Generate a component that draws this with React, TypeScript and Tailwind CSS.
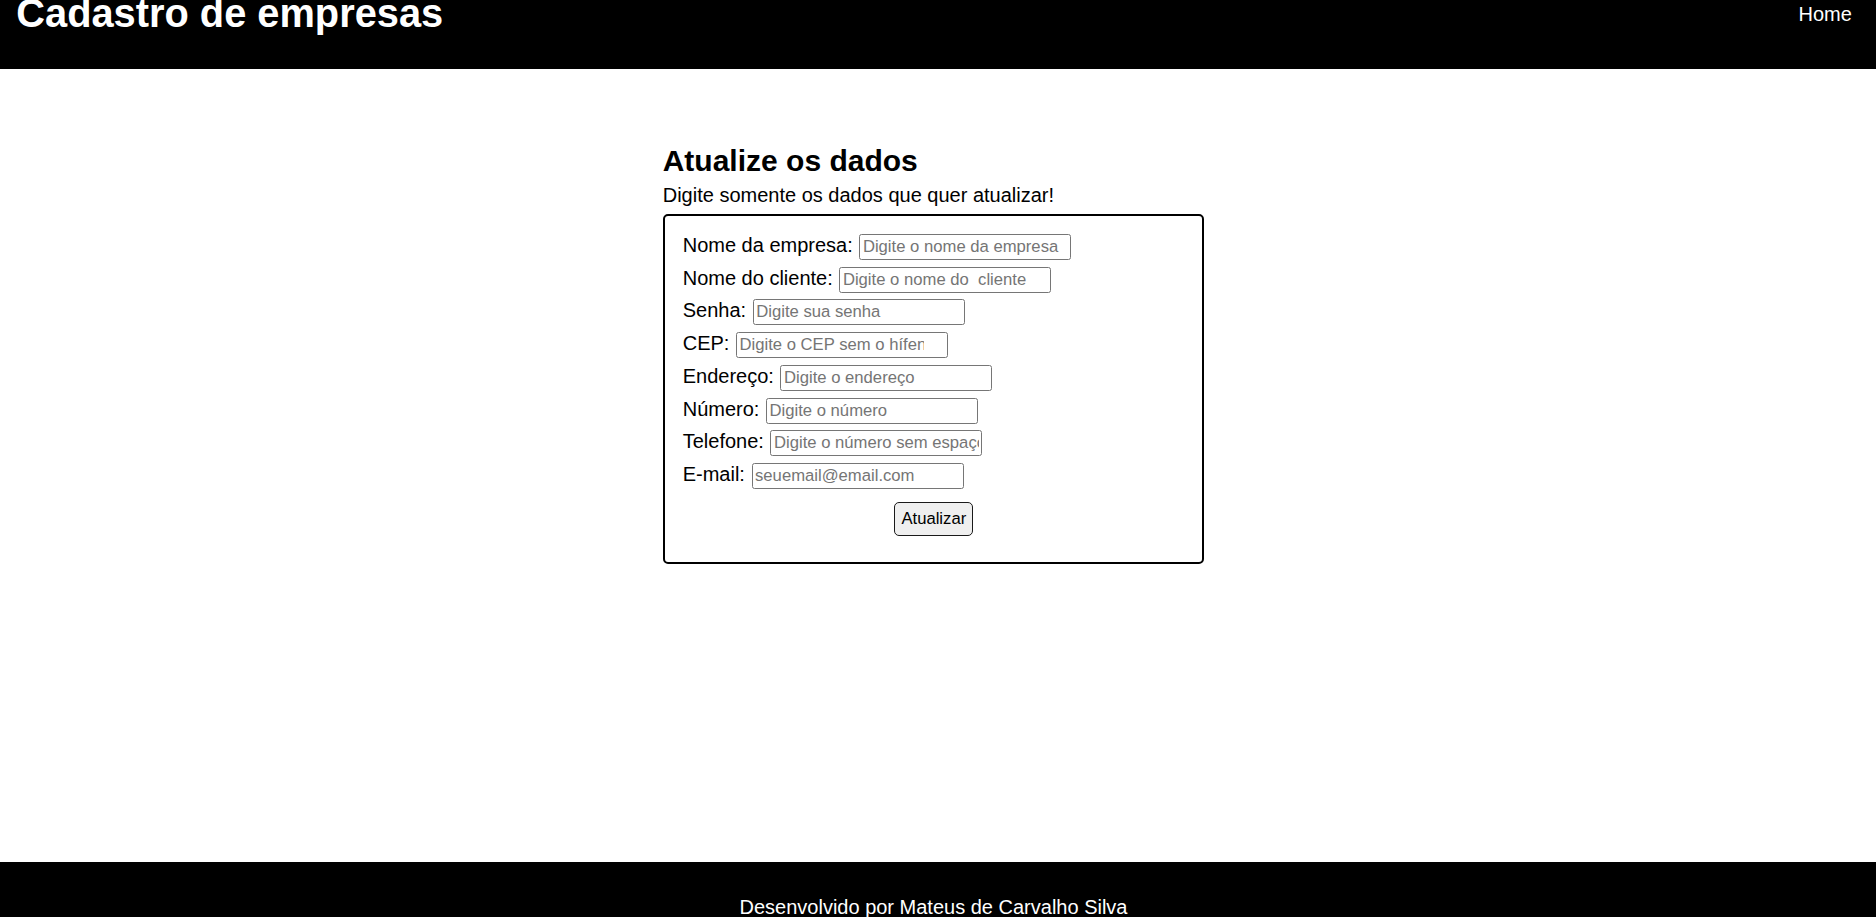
import React from "react";

const fields: { label: string; placeholder: string; type: string; pr: string }[] = [
  { label: "Nome da empresa:", placeholder: "Digite o nome da empresa", type: "text", pr: "pr-[2.5px]" },
  { label: "Nome do cliente:", placeholder: "Digite o nome do  cliente", type: "text", pr: "pr-[2.5px]" },
  { label: "Senha:", placeholder: "Digite sua senha", type: "password", pr: "pr-[2.5px]" },
  { label: "CEP:", placeholder: "Digite o CEP sem o hífen", type: "text", pr: "pr-[23px]" },
  { label: "Endereço:", placeholder: "Digite o endereço", type: "text", pr: "pr-[2.5px]" },
  { label: "Número:", placeholder: "Digite o número", type: "text", pr: "pr-[2.5px]" },
  { label: "Telefone:", placeholder: "Digite o número sem espaços", type: "text", pr: "pr-[2.5px]" },
  { label: "E-mail:", placeholder: "seuemail@email.com", type: "email", pr: "pr-[2.5px]" },
];

export default function App() {
  return (
    <div
      className="flex h-[917px] flex-col overflow-hidden bg-white text-black"
      style={{ fontFamily: '"Liberation Sans", Arial, sans-serif' }}
    >
      <header className="flex h-[69px] shrink-0 items-start justify-between bg-black pl-[16.3px] pr-[24.2px] text-white">
        <h1 className="text-[39.8px] font-bold leading-[27px]">Cadastro de empresas</h1>
        <a className="pt-[2.6px] text-[20px] leading-[23px] text-white" href="#">
          Home
        </a>
      </header>

      <main className="flex flex-1 justify-center pr-[9.6px] pt-[74.6px]">
        <div className="w-[541px]">
          <h2 className="text-[30px] font-bold leading-[34px]">Atualize os dados</h2>
          <p className="mt-[6px] text-[20px] leading-[23px]">
            Digite somente os dados que quer atualizar!
          </p>
          <form
            className="mt-[7px] w-[541px] rounded-[5px] border-2 border-black pb-[26.6px] pl-[18px] pr-[16.8px] pt-[18.5px]"
            onSubmit={(e) => e.preventDefault()}
          >
            <div className="flex flex-col gap-[6.7px]">
              {fields.map((f) => (
                <div key={f.label} className="flex items-baseline gap-[6.6px]">
                  <label className="whitespace-nowrap text-[20px] leading-[23px]">{f.label}</label>
                  <input
                    type={f.type}
                    placeholder={f.placeholder}
                    className={`h-[26px] w-[212px] shrink-0 rounded-[2.5px] border border-[#767676] bg-white pl-[2.5px] ${f.pr} text-[16.67px] leading-[19px] text-black outline-none placeholder:text-[#757575]`}
                    style={{ whiteSpace: "pre" }}
                  />
                </div>
              ))}
            </div>
            <div className="mt-[13.4px] flex justify-center">
              <button
                type="submit"
                className="flex h-[33.4px] w-[79px] items-center justify-center rounded-[5px] border border-[#1a1a1a] bg-[#efefef] text-[16.67px] leading-[19px] text-black"
              >
                Atualizar
              </button>
            </div>
          </form>
        </div>
      </main>

      <footer className="h-[55.3px] shrink-0 bg-black pr-[9px] pt-[34.2px] text-center text-[20px] leading-[23px] text-white">
        Desenvolvido por Mateus de Carvalho Silva
      </footer>
    </div>
  );
}
